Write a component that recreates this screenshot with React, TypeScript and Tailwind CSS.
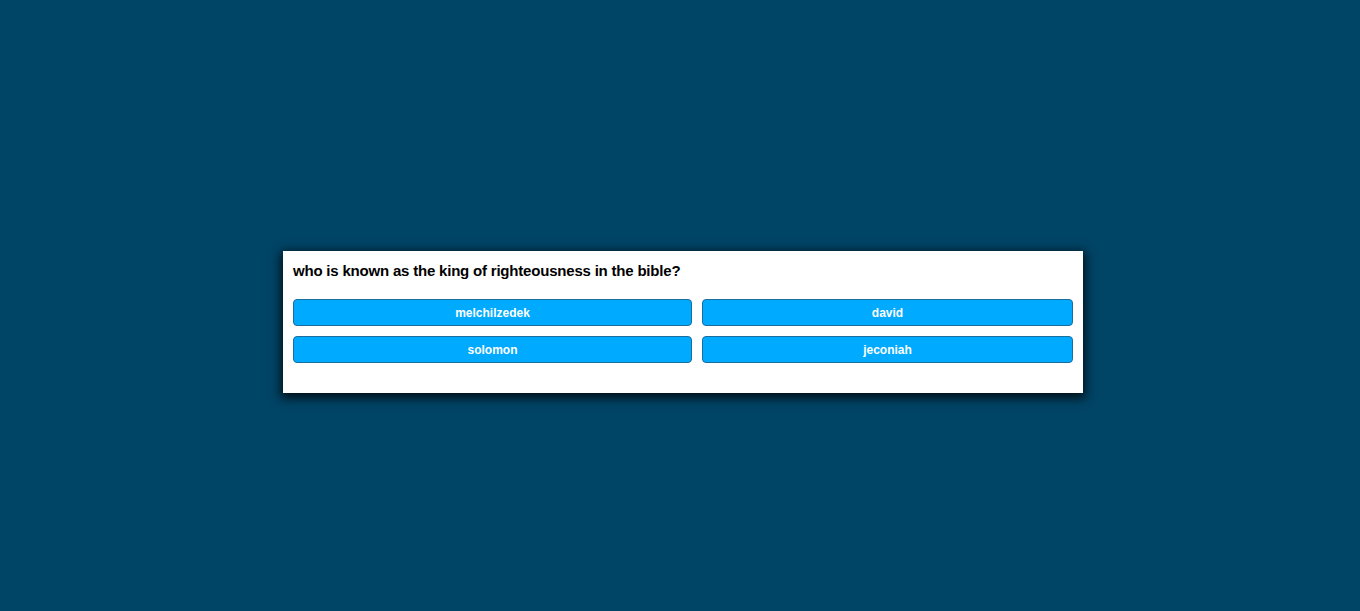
const answers = ["melchilzedek", "david", "solomon", "jeconiah"];

export default function App() {
  return (
    <div className="min-h-[611px] w-full bg-[#004466] flex justify-center items-start pt-[251px] pl-[6px] font-['Liberation_Sans',Arial,sans-serif]">
      <div className="w-[800px] bg-white px-[10px] pt-[11px] pb-[30px] shadow-[0_3px_10px_2px_rgba(0,0,0,0.8)]">
        <h1 className="text-[15px] font-bold text-black leading-[18px] tracking-[-0.2px]">
          who is known as the king of righteousness in the bible?
        </h1>
        <div className="mt-[19px] grid grid-cols-[399fr_371fr] gap-[10px]">
          {answers.map((a) => (
            <button
              key={a}
              type="button"
              className="h-[27px] rounded-[4px] border border-[#1a6e9e] bg-[#00aaff] text-white text-[12px] font-bold"
            >
              {a}
            </button>
          ))}
        </div>
      </div>
    </div>
  );
}
